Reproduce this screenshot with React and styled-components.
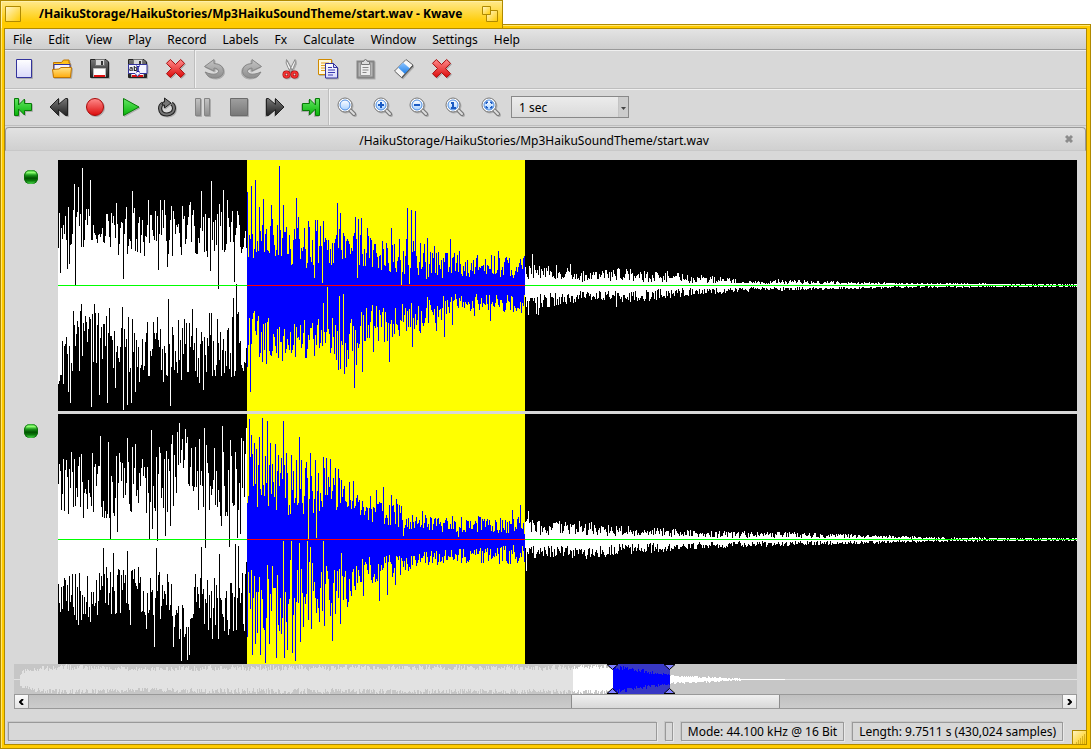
import React, { useState } from "react";
import styled, { createGlobalStyle, css } from "styled-components";

const GlobalStyle = createGlobalStyle`
  * {
    box-sizing: border-box;
  }
  body {
    margin: 0;
    background-color: #fff;
    color: #000;
    font-family: "Noto Sans", sans-serif;
    font-size: 12px;
    line-height: 16px;
  }
`;

const menus = [
  "File",
  "Edit",
  "View",
  "Play",
  "Record",
  "Labels",
  "Fx",
  "Calculate",
  "Window",
  "Settings",
  "Help",
];

const SELECT_FROM = 189;
const SELECT_TO = 467;
const WAVE_WIDTH = 1019;
const OVERVIEW_WIDTH = 1063;

// envelopes: [x, lowest, highest], spikes: x, height, x, height, ...
const channels = [
  {
    name: "Channel 1",
    height: 251,
    up: {
      seed: 7,
      envelope: [
        [0, 16, 76], [14, 22, 80], [34, 44, 76], [60, 30, 78], [100, 26, 80], [150, 28, 86],
        [188, 22, 72], [200, 20, 76], [240, 16, 68], [290, 22, 60], [320, 14, 48], [360, 6, 46],
        [400, 7, 32], [466, 6, 28], [468, 6, 22], [500, 5, 20], [530, 3, 13], [560, 5, 18],
        [600, 2, 13], [650, 2, 10], [700, 1, 4], [720, 1, 6], [770, 1, 4], [850, 1, 2], [1019, 0, 1],
      ],
      spikes: [
        2, 12, 9, 16, 16, 101, 17, 0, 20, 98, 24, 117, 32, 105, 58, 82, 65, 6, 74, 94, 90, 85,
        100, 15, 102, 85, 106, 85, 109, 18, 132, 83, 143, 94, 152, 14, 153, 104, 160, -4, 165, 95,
        169, 85, 176, 3, 189, 93, 193, 99, 197, 105, 201, 78, 205, 86, 213, 80, 221, 119, 225, 80,
        238, 87, 250, 64, 256, 7, 257, 65, 264, 2, 279, 82, 282, 72, 297, 68, 299, 7, 300, 66,
        303, 67, 309, 57, 333, 57, 343, 0, 349, 77, 351, 1, 353, 75, 357, 74, 369, 47, 392, 46,
        401, 34, 440, 34, 466, 29, 474, 31, 512, 21, 560, 17, 609, 14,
      ],
    },
    down: {
      seed: 19,
      envelope: [
        [0, 54, 100], [14, 44, 98], [20, 24, 90], [60, 24, 84], [80, 32, 94], [130, 28, 92],
        [188, 24, 90], [195, 22, 64], [220, 34, 74], [270, 28, 72], [290, 16, 66], [320, 18, 58],
        [360, 12, 46], [400, 6, 27], [466, 8, 27], [468, 8, 27], [500, 6, 20], [530, 5, 14],
        [575, 4, 18], [620, 2, 11], [660, 2, 8], [700, 1, 5], [770, 1, 4], [850, 0, 2], [1019, 0, 1],
      ],
      spikes: [
        10, 106, 12, 117, 15, 25, 23, 18, 33, 121, 36, 18, 41, 109, 49, 117, 51, 22, 57, 102,
        64, 21, 65, 124, 69, 119, 73, 117, 77, 106, 81, 96, 105, 96, 110, 13, 112, 120, 123, 94,
        134, 23, 141, 97, 145, 104, 157, 90, 173, 91, 175, 12, 178, -2, 189, 81, 192, 106, 201, 71,
        204, 76, 208, 78, 224, 75, 248, 72, 265, 17, 269, 1, 278, 74, 280, 84, 281, 10, 282, 83,
        285, 8, 286, 88, 288, 81, 290, 73, 296, 102, 298, 79, 304, 86, 315, 66, 331, 76, 354, 61,
        362, 47, 378, 45, 386, 51, 394, 39, 416, 30, 432, 35, 470, 29, 478, 28, 480, 29, 558, 21,
      ],
    },
  },
  {
    name: "Channel 2",
    height: 250,
    up: {
      seed: 31,
      envelope: [
        [0, 20, 82], [40, 18, 84], [80, 18, 82], [105, 22, 92], [120, 36, 106], [140, 26, 92],
        [188, 16, 88], [195, 26, 92], [240, 22, 82], [275, 28, 68], [295, 22, 46], [340, 10, 37],
        [360, 9, 27], [400, 6, 23], [466, 5, 23], [480, 4, 19], [520, 4, 19], [570, 2, 14],
        [620, 2, 10], [680, 1, 8], [740, 1, 7], [800, 1, 5], [880, 0, 2], [1019, 0, 1],
      ],
      spikes: [
        13, 87, 23, 85, 34, 86, 42, 103, 50, 97, 52, 0, 58, 83, 59, 7, 61, 86, 69, 101, 74, 92,
        77, 95, 91, 0, 93, 109, 94, 10, 99, -2, 101, 92, 107, 3, 108, 88, 112, 13, 114, 104,
        119, 107, 121, 116, 124, 100, 127, 110, 129, 102, 133, 91, 141, 100, 146, 111, 147, -9,
        148, 94, 156, 91, 163, 13, 164, 113, 171, -8, 172, 99, 177, 87, 179, 1, 182, 5, 183, 101,
        185, 98, 188, 111, 191, 120, 193, 104, 196, 96, 201, 102, 204, 121, 209, 118, 212, 96,
        217, 95, 220, 84, 225, 118, 228, 86, 233, 84, 241, 102, 243, 79, 250, 0, 252, 86, 257, 79,
        258, 1, 265, 82, 268, 81, 272, 80, 277, 71, 280, 70, 283, 59, 291, 57, 295, 58, 299, 44,
        312, 43, 318, 49, 325, 52, 333, 44, 338, 40, 345, 3, 364, 28, 400, 2, 454, 29, 462, 34,
        470, 28,
      ],
    },
    down: {
      seed: 43,
      envelope: [
        [0, 36, 82], [40, 28, 80], [60, 24, 74], [90, 22, 82], [110, 30, 84], [120, 66, 96],
        [128, 58, 98], [135, 32, 88], [188, 26, 94], [195, 28, 100], [240, 18, 82], [285, 28, 68],
        [300, 18, 48], [340, 12, 36], [360, 12, 27], [400, 6, 23], [440, 6, 25], [466, 5, 23],
        [480, 5, 17], [530, 6, 19], [580, 3, 14], [640, 2, 9], [700, 1, 7], [780, 1, 5],
        [880, 0, 2], [1019, 0, 1],
      ],
      spikes: [
        20, 85, 32, 82, 45, 8, 55, 13, 69, 11, 72, 85, 88, 89, 96, 107, 98, 8, 115, 107, 121, 99,
        123, 121, 129, 120, 131, 115, 143, 7, 150, 90, 154, 99, 160, 99, 161, 14, 170, 95, 177, 4,
        178, 90, 180, 6, 186, 91, 188, 22, 189, 97, 194, 115, 197, 104, 202, 115, 207, 123,
        211, 104, 218, 118, 221, 91, 223, 94, 225, 1, 226, 118, 229, 110, 233, 1, 234, 113,
        237, 121, 241, 3, 242, 102, 245, 87, 249, 1, 250, 80, 252, 7, 253, 89, 258, 73, 261, 82,
        264, 71, 265, 1, 266, 86, 272, 76, 274, 101, 277, 74, 282, 84, 283, 13, 289, 67, 290, 62,
        293, 56, 297, 50, 305, 56, 321, 61, 329, 55, 337, 45, 468, 31,
      ],
    },
  },
];

const overview = {
  seed: 5,
  envelope: [
    [0, 0, 0], [5, 0, 0], [6, 4, 8], [20, 8, 13], [60, 9, 15], [120, 8, 12], [200, 8, 14],
    [280, 8, 14], [400, 9, 14], [520, 8, 14], [598, 10, 14], [600, 10, 14], [630, 5, 10],
    [655, 3, 5], [657, 2, 4], [690, 1, 3], [720, 0, 1], [740, 0, 0], [1063, 0, 0],
  ],
  spikes: [],
};

function makeHeights({ seed, envelope, spikes }, width) {
  let state = seed;
  const heights = [];
  let key = 0;
  for (let x = 0; x < width; x++) {
    while (key < envelope.length - 2 && envelope[key + 1][0] <= x) key++;
    const [x0, lo0, hi0] = envelope[key];
    const [x1, lo1, hi1] = envelope[key + 1];
    const t = (x - x0) / (x1 - x0);
    state = (state * 16807) % 2147483647;
    const random = ((state >> 4) % 1000) / 1000;
    const lo = lo0 + (lo1 - lo0) * t;
    const hi = hi0 + (hi1 - hi0) * t;
    heights.push(Math.round(lo + (hi - lo) * random));
  }
  for (let i = 0; i < spikes.length; i += 2) {
    heights[spikes[i]] = spikes[i + 1];
  }
  return heights;
}

function makePath(up, down, middle, from, to) {
  let d = "";
  for (let x = from; x < to; x++) {
    d += `M${x} ${middle - up[x]}h1V${middle + 1 + down[x]}h-1z`;
  }
  return d;
}

function Wave({ channel }) {
  const up = makeHeights(channel.up, WAVE_WIDTH);
  const down = makeHeights(channel.down, WAVE_WIDTH);
  return (
    <Signal
      viewBox={`0 0 ${WAVE_WIDTH} ${channel.height}`}
      preserveAspectRatio="none"
      shapeRendering="crispEdges"
      role="img"
      aria-label={channel.name}
    >
      <rect width={WAVE_WIDTH} height={channel.height} fill="#000" />
      <rect x={SELECT_FROM} width={SELECT_TO - SELECT_FROM} height={channel.height} fill="#ff0" />
      <path d={makePath(up, down, 125, 0, SELECT_FROM)} fill="#fff" />
      <path d={makePath(up, down, 125, SELECT_FROM, SELECT_TO)} fill="#00f" />
      <path d={makePath(up, down, 125, SELECT_TO, WAVE_WIDTH)} fill="#fff" />
      <rect y="125" width={WAVE_WIDTH} height="1" fill="#0f0" />
      <rect x={SELECT_FROM} y="125" width={SELECT_TO - SELECT_FROM} height="1" fill="#f00" />
    </Signal>
  );
}

function Overview() {
  const up = makeHeights(overview, OVERVIEW_WIDTH);
  const down = makeHeights({ ...overview, seed: 11 }, OVERVIEW_WIDTH);
  return (
    <OverviewStrip
      viewBox={`0 0 ${OVERVIEW_WIDTH} 30`}
      preserveAspectRatio="none"
      shapeRendering="crispEdges"
      role="img"
      aria-label="Overview"
    >
      <rect width={OVERVIEW_WIDTH} height="30" fill="#c6c6c6" />
      <rect x="599" width="57" height="30" fill="#3838c4" />
      <path d={makePath(up, down, 15, 0, 559)} fill="#e2e2e2" />
      <path d={makePath(up, down, 15, 559, 599)} fill="#fff" />
      <path d={makePath(up, down, 15, 599, 656)} fill="#00f" />
      <path d={makePath(up, down, 15, 656, 771)} fill="#fff" />
      <path d={makePath(up, down, 15, 771, OVERVIEW_WIDTH)} fill="#e2e2e2" />
      {[599, 656].map((x) => (
        <g key={x} fill="#8080ff" stroke="#000" shapeRendering="auto">
          <path d={`M${x - 6} .5h11l-5.500 5z`} />
          <path d={`M${x - 6} 29.5h11l-5.500-5z`} />
        </g>
      ))}
    </OverviewStrip>
  );
}

const floppy = (
  <>
    <path d="M1.5 1.5H17L19.5 4v15.5h-18z" fill="url(#dark)" stroke="#222" />
    <path d="M6.5 1.5h9v6h-9z" fill="#d8d8d8" stroke="#777" />
    <path d="M12 3h2v4h-2z" fill="#333" />
    <path d="M4.5 10.5h12v8h-12z" fill="#fff" stroke="#bbb" />
    <path d="M5 17h11v2H5z" fill="#e01010" />
  </>
);

const lens = (
  <>
    <path d="m14 14 4 4" stroke="#777" strokeWidth="4" strokeLinecap="round" />
    <path d="m14 14 4 4" stroke="#ddd" strokeWidth="2" strokeLinecap="round" />
    <circle cx="9" cy="9" r="7" fill="#fff" stroke="#777" />
    <circle cx="9" cy="9" r="5" fill="url(#glass)" stroke="#4a8be0" />
  </>
);

const icons = {
  new: <path d="M3.5 1.5h15v18h-15z" fill="url(#paper)" stroke="#33339c" />,
  open: (
    <>
      <path d="M2.5 18V4.5h8L12.500 2H18v3h1v13z" fill="#ffc21a" stroke="#c07500" />
      <path d="M3 6.5h16v7H3z" fill="#f4f4ff" stroke="#33339c" />
      <path d="M1.5 11.5 8 11l2-1.500h10.500l-1 10h-17z" fill="url(#gold)" stroke="#c07500" />
    </>
  ),
  save: floppy,
  saveAs: (
    <>
      {floppy}
      <path d="M1.5 6.5H20v9h-7l-2.500 3-2.500-3H1.500z" fill="#f4f4ff" stroke="#33339c" />
      <text x="2" y="13" fontSize="7" fontWeight="700" fill="#222">
        ab
      </text>
      <path d="M9 8h1l1 1v4l-1 1H9M13 8h-1l-1 1v4l1 1h1" fill="none" stroke="#1c1c9c" />
    </>
  ),
  cross: (
    <path
      d="m5.300 1.500 5.200 5 5.200-5 3.800 3.800-5 5.200 5 5.200-3.800 3.800-5.200-5-5.200 5-3.800-3.800 5-5.200-5-5.200z"
      fill="url(#red)"
      stroke="#a80a0a"
    />
  ),
  undo: (
    <path
      d="M1.500 8.500 11 1.500v4q9.500.5 9.500 8-.5 5.500-7.500 6.500-8 0-9.500-4L2 14q3 1.500 6 2 6.500 1 7.500-2.500 0-3-4.500-3.500v3z"
      fill="url(#grey)"
      stroke="#858585"
    />
  ),
  cut: (
    <>
      <path d="M7.500 1.500q-1.500 3 1.500 8l2.500 5 2-1.500zM16 1.500q1.500 3-1.500 8l-2.500 5-2-1.500z" fill="#f4f4f4" stroke="#8a8a8a" />
      <g fill="none" stroke="#9c0000" strokeWidth="4">
        <circle cx="7.500" cy="16.500" r="2" />
        <circle cx="15.500" cy="16.500" r="2" />
      </g>
      <g fill="none" stroke="#f03030" strokeWidth="2">
        <circle cx="7.500" cy="16.500" r="2.500" />
        <circle cx="15.500" cy="16.500" r="2.500" />
      </g>
      <circle cx="7.500" cy="16.500" r="1" fill="#d8d8d8" />
      <circle cx="15.500" cy="16.500" r="1" fill="#d8d8d8" />
    </>
  ),
  copy: (
    <>
      <path d="M1.500 1.500h13v15h-13z" fill="#fff8dc" stroke="#d08a00" />
      <path d="M4 5h8M4 7.500h4M4 10h4M4 12.500h4" stroke="#e0a020" />
      <path d="M8.500 5.500h8l4 4V20h-12z" fill="url(#paper)" stroke="#33339c" />
      <path d="M16.500 5.500v4h4z" fill="#d5d5ff" stroke="#33339c" />
      <path d="M11 9.500h4M11 12h7M11 14.500h7M11 17h5" stroke="#3a3ab4" />
    </>
  ),
  paste: (
    <>
      <path d="M2.500 3.500h16v16h-16z" fill="#b4b4b4" stroke="#858585" strokeWidth="2" />
      <path d="M5.500 5.500h10v12h-10z" fill="#ededed" stroke="#999" />
      <path d="M6.500 6.500v-3h2l2-2.500 2 2.500h2v3z" fill="#ddd" stroke="#777" />
      <path d="M7.500 9.500h6M7.500 12h6M7.500 14.500h4" stroke="#888" />
    </>
  ),
  erase: (
    <>
      <path d="M1.500 13 13 1.500l7 5.500L8.500 19.500z" fill="#f6f6f6" stroke="#666" />
      <path d="m5 9.500 5-5 7 6-5 5.500z" fill="url(#blue)" />
      <path d="M8.500 19.500 20 7v1.500l-11 12z" fill="#555" />
    </>
  ),
  toStart: (
    <path d="M2.500 2.500h4V9l6-6v4.500h7v7h-7V19l-6-6v6.500h-4z" fill="url(#green)" stroke="#087a08" />
  ),
  rewind: <path d="m2 11 8.500-8.500v6l7-6h2v17h-2l-7-6v6z" fill="url(#dark)" stroke="#222" />,
  record: <circle cx="11" cy="11" r="8.500" fill="url(#red)" stroke="#a80a0a" />,
  play: <path d="M3.500 2.500v17L19 11z" fill="url(#green)" stroke="#087a08" />,
  loop: (
    <>
      <g fill="none">
        <path d="M7 7.500q-3 1.500-3 5 .5 6 7 6 6.500-.5 7-6 0-3.500-2.500-5" stroke="#222" strokeWidth="4" />
        <path d="M7 7.500q-3 1.500-3 5 .5 6 7 6 6.500-.5 7-6 0-3.500-2.500-5" stroke="#777" strokeWidth="2" />
      </g>
      <path d="M8.500 2 15 7l-6.500 5V9H6l1-3h1.500z" fill="#777" stroke="#222" />
    </>
  ),
  pause: (
    <path d="M3.500 2.500h5v17h-5zM12.500 2.500h5v17h-5z" fill="url(#grey)" stroke="#858585" />
  ),
  stop: <path d="M2.500 2.500h17v17h-17z" fill="url(#stop)" stroke="#6c6c6c" />,
  zoomSelection: lens,
  zoomIn: (
    <>
      {lens}
      <path d="M6 9h6M9 6v6" stroke="#1a5bc4" strokeWidth="2" />
    </>
  ),
  zoomOut: (
    <>
      {lens}
      <path d="M6 9h6" stroke="#1a5bc4" strokeWidth="2" />
    </>
  ),
  zoomNormal: (
    <>
      {lens}
      <path d="M7 7h2v5M7 12h5" fill="none" stroke="#1a5bc4" strokeWidth="2" />
    </>
  ),
  zoomAll: (
    <>
      {lens}
      <path d="M6 8V6h2zM10 6h2v2zM12 10v2h-2zM8 12H6v-2z" fill="#1a5bc4" stroke="#1a5bc4" />
    </>
  ),
};

const fileTools = [
  ["new", "New"],
  ["open", "Open"],
  ["save", "Save"],
  ["saveAs", "Save as"],
  ["cross", "Close"],
];
const editTools = [
  ["undo", "Undo"],
  ["undo", "Redo", true],
  ["cut", "Cut"],
  ["copy", "Copy"],
  ["paste", "Paste"],
  ["erase", "Erase"],
  ["cross", "Delete"],
];
const playTools = [
  ["toStart", "Go to start"],
  ["rewind", "Rewind"],
  ["record", "Record"],
  ["play", "Play"],
  ["loop", "Loop"],
  ["pause", "Pause"],
  ["stop", "Stop"],
  ["rewind", "Forward", true],
  ["toStart", "Go to end", true],
];
const zoomTools = [
  ["zoomSelection", "Zoom to selection"],
  ["zoomIn", "Zoom in"],
  ["zoomOut", "Zoom out"],
  ["zoomNormal", "Zoom to 100%"],
  ["zoomAll", "Zoom to all"],
];

const gradients = {
  red: ["#ff8c8c", "#dc0a0a"],
  green: ["#63e663", "#08b408"],
  dark: ["#777", "#222"],
  grey: ["#c4c4c4", "#8e8e8e"],
  stop: ["#a0a0a0", "#777"],
  paper: ["#fff", "#d9d9fa"],
  gold: ["#ffe48a", "#ffab0a"],
  glass: ["#fff", "#a9d2ff"],
  blue: ["#8cc4ff", "#1f7fe8"],
};

function Tools({ items, size, divided }) {
  return (
    <ToolGroup $divided={divided}>
      {items.map(([icon, label, flipped]) => (
        <ToolButton key={label} type="button" aria-label={label} $size={size}>
          <Icon $flipped={flipped} viewBox="0 0 22 22" aria-hidden="true">
            {icons[icon]}
          </Icon>
        </ToolButton>
      ))}
    </ToolGroup>
  );
}

export default function App() {
  const [zoom, setZoom] = useState("1 sec");

  return (
    <>
      <GlobalStyle />
      <Defs aria-hidden="true">
        <defs>
          {Object.entries(gradients).map(([id, [from, to]]) => (
            <linearGradient key={id} id={id} x1="0" y1="0" x2="0" y2="1">
              <stop offset="0" stopColor={from} />
              <stop offset="1" stopColor={to} />
            </linearGradient>
          ))}
          <linearGradient id="tab" x1="0" y1="0" x2="1" y2="1">
            <stop offset="0" stopColor="#fff6cf" />
            <stop offset="1" stopColor="#ffcb00" />
          </linearGradient>
        </defs>
      </Defs>
      <Screen>
        <TitleTab>
          <TabButton type="button" aria-label="Close window">
            <svg width="16" height="16">
              <path d="M.5.5h15v15H.5z" fill="url(#tab)" stroke="#b08a00" />
            </svg>
          </TabButton>
          <Title>/HaikuStorage/HaikuStories/Mp3HaikuSoundTheme/start.wav - Kwave</Title>
          <TabButton type="button" aria-label="Zoom window">
            <svg width="16" height="16">
              <path d="M4.500 4.500h11v11h-11z" fill="url(#tab)" stroke="#b08a00" />
              <path d="M.5.5h8v8h-8z" fill="url(#tab)" stroke="#b08a00" />
            </svg>
          </TabButton>
        </TitleTab>
        <Frame>
          <Content>
            <MenuBar>
              {menus.map((menu) => (
                <MenuItem key={menu} type="button">
                  {menu}
                </MenuItem>
              ))}
            </MenuBar>
            <Toolbar $height={39}>
              <Tools items={fileTools} size={38} />
              <Tools items={editTools} size={38} divided />
            </Toolbar>
            <Toolbar $height={37}>
              <Tools items={playTools} size={36} />
              <Tools items={zoomTools} size={36} divided />
              <SelectBox>
                <select aria-label="Zoom" value={zoom} onChange={(e) => setZoom(e.target.value)}>
                  <option>1 sec</option>
                  <option>10 sec</option>
                  <option>1 min</option>
                </select>
                <svg width="5" height="3" aria-hidden="true">
                  <path d="M0 0h5L2.500 3z" fill="#444" />
                </svg>
              </SelectBox>
            </Toolbar>
            <FileTab>
              <FileName>/HaikuStorage/HaikuStories/Mp3HaikuSoundTheme/start.wav</FileName>
              <CloseTab type="button" aria-label="Close file">
                <svg width="8" height="8" aria-hidden="true">
                  <path d="m1 1 6 6m0-6L1 7" stroke="#8c8c8c" strokeWidth="3" />
                </svg>
              </CloseTab>
            </FileTab>
            <Tracks>
              {channels.map((channel) => (
                <Track key={channel.name} $height={channel.height}>
                  <Lamp type="button" aria-label={channel.name} />
                  <Wave channel={channel} />
                </Track>
              ))}
            </Tracks>
            <Navigation>
              <Overview />
              <ScrollBar>
                <ScrollButton type="button" aria-label="Scroll left">
                  <svg width="5" height="6" aria-hidden="true">
                    <path d="M4 0 1 3l3 3" fill="none" stroke="#000" strokeWidth="2" />
                  </svg>
                </ScrollButton>
                <ScrollTrack>
                  <Thumb />
                </ScrollTrack>
                <ScrollButton type="button" aria-label="Scroll right">
                  <svg width="5" height="6" aria-hidden="true">
                    <path d="m1 0 3 3-3 3" fill="none" stroke="#000" strokeWidth="2" />
                  </svg>
                </ScrollButton>
              </ScrollBar>
            </Navigation>
            <StatusBar>
              <Status $grow />
              <Status />
              <Status $text>Mode: 44.100 kHz @ 16 Bit</Status>
              <Status $text>Length: 9.7511 s (430,024 samples)</Status>
            </StatusBar>
            <ResizeCorner viewBox="0 0 14 14" aria-hidden="true">
              <path d="M0 0h14v14H0z" fill="url(#tab)" />
              <path d="M0 14V.5h14M.5 0v14" fill="none" stroke="#b08a00" />
              <path
                d="M12 5h1M10 7h1M12 7h1M8 9h1M10 9h1M12 9h1M6 11h1M8 11h1M10 11h1M12 11h1M4 13h1M6 13h1M8 13h1M10 13h1M12 13h1"
                stroke="#b08a00"
              />
            </ResizeCorner>
          </Content>
        </Frame>
      </Screen>
    </>
  );
}

const plainButton = css`
  display: flex;
  align-items: center;
  justify-content: center;
  padding: 0;
  border: none;
  background: none;
  color: inherit;
  font: inherit;
`;

const Defs = styled.svg`
  position: absolute;
  width: 0;
  height: 0;
`;
const Screen = styled.div`
  display: flex;
  flex-direction: column;
  min-height: 100vh;
`;
const TitleTab = styled.div`
  display: flex;
  align-items: center;
  align-self: flex-start;
  position: relative;
  height: 28px;
  margin-bottom: -4px;
  padding: 0 4px 2px;
  border: 1px solid #b08a00;
  border-bottom: none;
  background: linear-gradient(#ffe98c, #ffcb00 80%);
  box-shadow: inset 1px 1px #fff0a8;
`;
const TabButton = styled.button`
  ${plainButton}
`;
const Title = styled.h1`
  margin: 0 20px 0 18px;
  font-size: 12px;
  line-height: 16px;
  font-weight: 700;
  white-space: nowrap;
`;
const Frame = styled.div`
  display: flex;
  flex: 1;
  padding: 3px;
  border: 1px solid #b08a00;
  background-color: #ffcb00;
  box-shadow: inset 1px 1px #ffe672;
`;
const Content = styled.main`
  position: relative;
  display: flex;
  flex: 1;
  flex-direction: column;
  min-width: 0;
  border: 1px solid #b08a00;
  background-color: #d8d8d8;
`;
const MenuBar = styled.nav`
  display: flex;
  height: 21px;
  border-bottom: 1px solid #999;
  background: linear-gradient(#e4e4e4, #cecece);
`;
const MenuItem = styled.button`
  ${plainButton}
  padding: 2px 8px 0;
`;
const Toolbar = styled.div`
  display: flex;
  align-items: stretch;
  height: ${({ $height }) => $height}px;
  border-bottom: 1px solid #bebebe;
  box-shadow: inset 0 1px #f0f0f0;
`;
const ToolGroup = styled.div`
  display: flex;
  ${({ $divided }) => $divided && "box-shadow: inset 1px 0 #f0f0f0, -1px 0 #bebebe;"}
`;
const ToolButton = styled.button`
  ${plainButton}
  width: ${({ $size }) => $size}px;
`;
const Icon = styled.svg`
  width: 22px;
  height: 22px;
  filter: drop-shadow(1px 1px 0 #0003);
  ${({ $flipped }) => $flipped && "transform: scaleX(-1);"}
`;
const SelectBox = styled.div`
  position: relative;
  align-self: center;
  margin-left: 2px;
  select {
    display: block;
    appearance: none;
    width: 118px;
    height: 22px;
    padding: 2px 18px 0 7px;
    border: 1px solid #888;
    border-radius: 0;
    background: linear-gradient(90deg, transparent 106px, #bbb 106px, #ccc 107px), linear-gradient(#ececec, #dadada);
    color: #000;
    font: inherit;
  }
  svg {
    position: absolute;
    right: 3px;
    top: 11px;
    pointer-events: none;
  }
`;
const FileTab = styled.div`
  display: flex;
  align-items: center;
  height: 24px;
  margin-top: 1px;
  padding-right: 12px;
  border: 1px solid #999;
  border-bottom-color: #c8c8c8;
  border-radius: 4px 4px 0 0;
  background: linear-gradient(#e2e2e2, #d0d0d0);
`;
const FileName = styled.div`
  flex: 1;
  padding: 4px 3px 0 0;
  text-align: center;
`;
const CloseTab = styled.button`
  ${plainButton}
`;
const Tracks = styled.div`
  display: flex;
  flex: 1;
  flex-direction: column;
  gap: 3px;
  padding: 9px 9px 0;
`;
const Track = styled.div`
  display: flex;
  flex: 1 1 ${({ $height }) => $height}px;
  align-items: flex-start;
`;
const Lamp = styled.button`
  flex: none;
  width: 14px;
  height: 14px;
  margin: 10px 20px 0 10px;
  padding: 0;
  border: none;
  border-radius: 6px;
  background: linear-gradient(#2fae2f, #8cff70 18%, #1c9a1c 36%, #005000 58%, #0a7a0a 76%, #4fe04f);
  box-shadow: inset 1px 0 #0a6a0a, inset -1px 0 #0a6a0a;
`;
const Signal = styled.svg`
  display: block;
  flex: 1;
  align-self: stretch;
  min-width: 0;
  height: auto;
`;
const Navigation = styled.div`
  padding: 0 9px;
`;
const OverviewStrip = styled.svg`
  display: block;
  width: 100%;
  height: 30px;
`;
const ScrollBar = styled.div`
  display: flex;
  height: 15px;
  border: 1px solid #999;
`;
const ScrollButton = styled.button`
  ${plainButton}
  width: 13px;
  background: linear-gradient(#fafafa, #e4e4e4);
`;
const ScrollTrack = styled.div`
  flex: 1;
  border: 1px solid #999;
  border-width: 0 1px;
  background: linear-gradient(#c0c0c0, #cccccc);
`;
const Thumb = styled.div`
  width: 20.2%;
  height: 13px;
  margin-left: 52.5%;
  border: 1px solid #8c8c8c;
  border-width: 0 1px;
  background: linear-gradient(#f0f0f0, #d8d8d8);
`;
const StatusBar = styled.footer`
  display: flex;
  gap: 8px;
  padding: 13px 23px 3px 3px;
`;
const Status = styled.div`
  display: flex;
  align-items: center;
  justify-content: center;
  height: 19px;
  min-width: 8px;
  padding: ${({ $text }) => ($text ? "0 6px" : "0")};
  border: 1px solid #999;
  box-shadow: -1px -1px #c8c8c8, 1px 1px #e8e8e8;
  white-space: nowrap;
  ${({ $grow }) => $grow && "flex: 1;"}
`;
const ResizeCorner = styled.svg`
  position: absolute;
  right: 0;
  bottom: 0;
  width: 14px;
  height: 14px;
`;
